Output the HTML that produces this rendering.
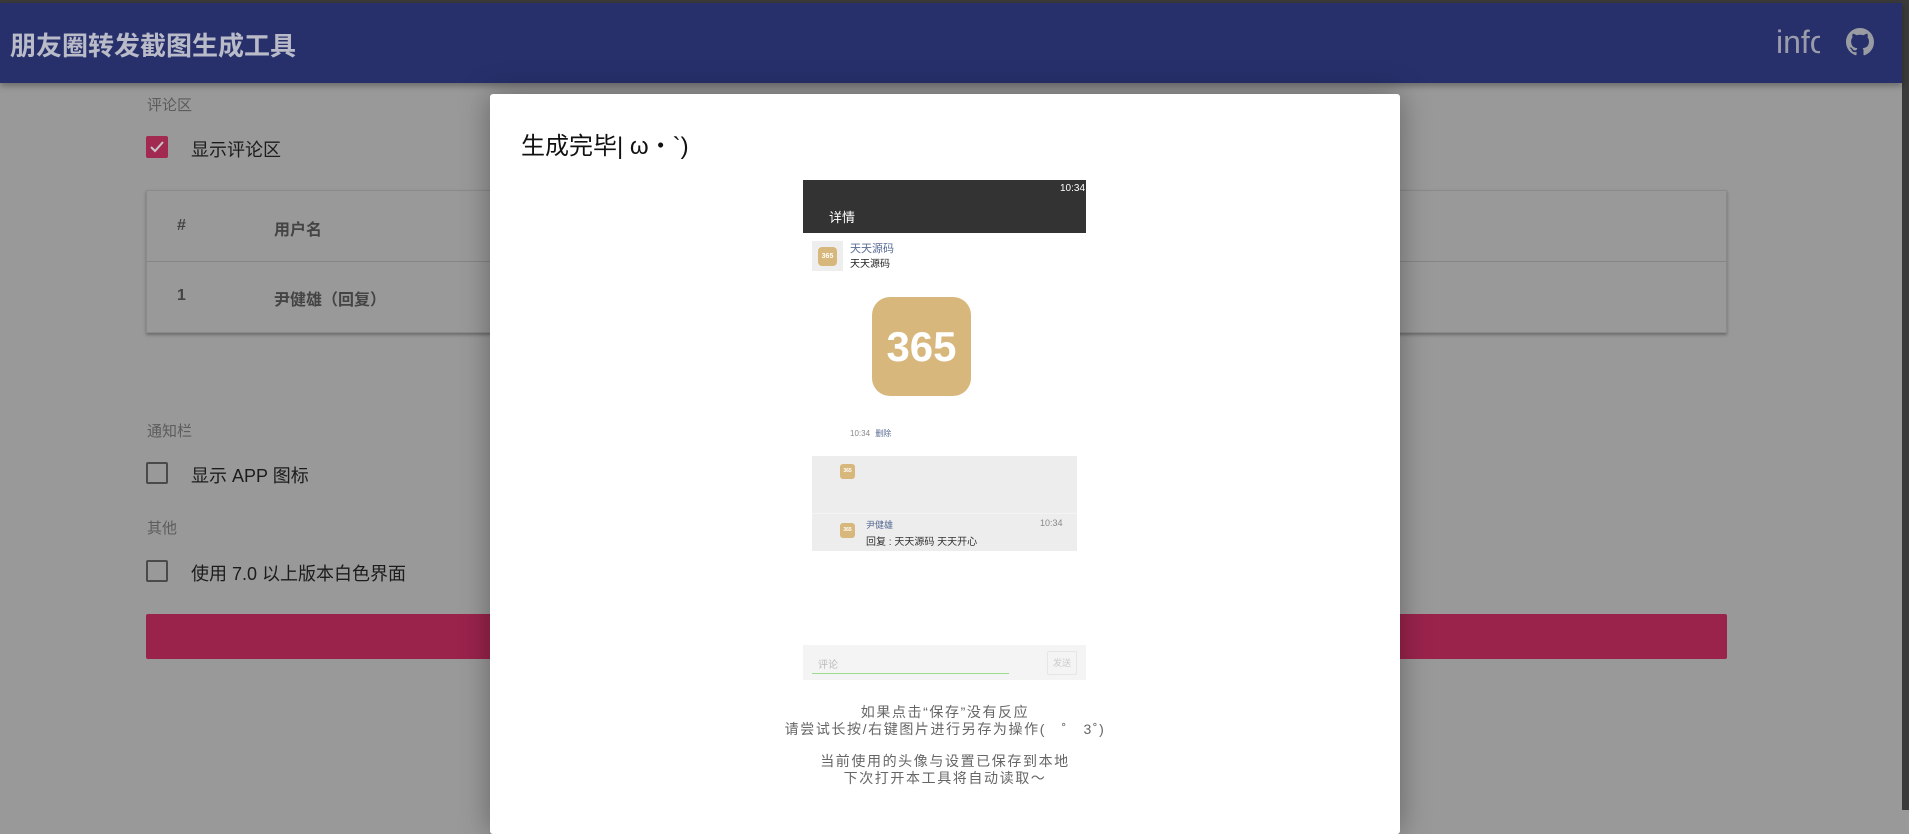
<!DOCTYPE html>
<html><head><meta charset="utf-8"><style>
*{margin:0;padding:0;box-sizing:border-box}
body{width:1909px;height:810px;overflow:hidden;background:#999;font-family:"Liberation Sans","Noto Sans CJK SC",sans-serif;position:relative}
.a{position:absolute;white-space:nowrap}
.cb{position:absolute;width:22px;height:22px;border:2px solid #4a4a4a;border-radius:2px}
</style></head><body>
<div class="a" style="left:0;top:0;width:1909px;height:3px;background:#3a3a3a"></div>
<div class="a" style="left:1902px;top:0;width:7px;height:810px;background:#3a3a3a"></div>
<div class="a" style="left:0;top:3px;width:1902px;height:80px;background:#27306b;box-shadow:0 3px 6px rgba(0,0,0,.3)"></div>
<div class="a" style="left:10px;top:26px;font-size:26px;font-weight:bold;color:#b9bbc8">朋友圈转发截图生成工具</div>
<div class="a" style="left:1776px;top:24px;font-size:32px;color:#9a9cac;width:44px;overflow:hidden">info</div>
<svg class="a" style="left:1846px;top:28px" width="28" height="28" viewBox="0 0 16 16"><path fill="#9a9ca4" d="M8 0C3.58 0 0 3.580 0 8c0 3.54 2.29 6.53 5.470 7.59.4.07.55-.17.55-.38 0-.19-.01-.82-.01-1.49-2.01.37-2.53-.49-2.69-.94-.09-.23-.48-.94-.82-1.13-.28-.15-.68-.52-.01-.53.63-.01 1.08.58 1.23.82.72 1.21 1.87.87 2.33.66.07-.52.28-.87.51-1.07-1.78-.2-3.64-.89-3.64-3.95 0-.87.31-1.59.82-2.15-.08-.2-.36-1.02.08-2.12 0 0 .67-.21 2.2.82.64-.18 1.32-.27 2-.27.68 0 1.36.09 2 .27 1.53-1.04 2.2-.82 2.2-.82.44 1.1.16 1.92.08 2.12.51.56.82 1.27.82 2.15 0 3.07-1.87 3.75-3.65 3.95.29.25.54.73.54 1.48 0 1.070-.01 1.93-.01 2.2 0 .21.15.46.55.38A8.013 8.013 0 0016 8c0-4.42-3.58-8-8-8z"/></svg>

<div class="a" style="left:147px;top:94px;font-size:15px;color:#5c5c5c">评论区</div>
<div class="cb" style="left:146px;top:136px;background:#a2294f;border-color:#a2294f"><svg width="18" height="18" style="position:absolute;left:0;top:0"><path d="M3 9l4 4 8-9" stroke="#c8c8c8" stroke-width="2" fill="none"/></svg></div>
<div class="a" style="left:191px;top:136px;font-size:18px;color:#1c1c1c">显示评论区</div>
<div class="a" style="left:146px;top:190px;width:1581px;height:143px;border:1px solid #8a8a8a;box-shadow:0 2px 3px rgba(0,0,0,.3)"></div>
<div class="a" style="left:147px;top:261px;width:1579px;height:1px;background:#858585"></div>
<div class="a" style="left:177px;top:217px;font-size:16px;font-weight:bold;color:#444">#</div>
<div class="a" style="left:274px;top:216px;font-size:16px;font-weight:bold;color:#444">用户名</div>
<div class="a" style="left:177px;top:287px;font-size:16px;font-weight:bold;color:#444">1</div>
<div class="a" style="left:274px;top:286px;font-size:16px;font-weight:bold;color:#444">尹健雄（回复）</div>

<div class="a" style="left:147px;top:420px;font-size:15px;color:#5c5c5c">通知栏</div>
<div class="cb" style="left:146px;top:462px"></div>
<div class="a" style="left:191px;top:462px;font-size:18px;color:#1c1c1c">显示 APP 图标</div>
<div class="a" style="left:147px;top:517px;font-size:15px;color:#5c5c5c">其他</div>
<div class="cb" style="left:146px;top:560px"></div>
<div class="a" style="left:191px;top:560px;font-size:18px;color:#1c1c1c">使用 7.0 以上版本白色界面</div>
<div class="a" style="left:146px;top:614px;width:1581px;height:45px;background:#9a234c;border-radius:2px"></div>

<div class="a" style="left:490px;top:94px;width:910px;height:740px;background:#fff;border-radius:3px;box-shadow:0 0 30px rgba(0,0,0,.35)"></div>
<div class="a" style="left:521px;top:126px;font-size:24px;color:#111">生成完毕| ω・`)</div>

<div class="a" style="left:803px;top:180px;width:283px;height:53px;background:#333"></div>
<div class="a" style="left:1060px;top:183px;font-size:10px;color:#fff">10:34</div>
<div class="a" style="left:829px;top:207px;font-size:13px;color:#fff">详情</div>
<div class="a" style="left:812px;top:241px;width:31px;height:30px;background:#eee"></div>
<div class="a" style="left:818px;top:247px;width:19px;height:19px;background:#d8b77c;border-radius:4px;color:#fff;font-size:7px;font-weight:bold;text-align:center;line-height:19px">365</div>
<div class="a" style="left:850px;top:240px;font-size:11px;color:#576b95">天天源码</div>
<div class="a" style="left:850px;top:255px;font-size:10px;color:#222">天天源码</div>
<div class="a" style="left:872px;top:297px;width:99px;height:99px;background:#d8b77c;border-radius:18px;color:#fff;font-size:42px;font-weight:bold;text-align:center;line-height:99px">365</div>
<div class="a" style="left:850px;top:428px;font-size:8px;color:#888">10:34 <span style="color:#576b95;margin-left:3px">删除</span></div>
<div class="a" style="left:812px;top:456px;width:265px;height:95px;background:#ededed"></div>
<div class="a" style="left:812px;top:513px;width:265px;height:1px;background:#f4f4f4"></div>
<div class="a" style="left:840px;top:464px;width:15px;height:15px;background:#d8b77c;border-radius:3px;color:#fff;font-size:5px;font-weight:bold;text-align:center;line-height:15px">365</div>
<div class="a" style="left:840px;top:523px;width:15px;height:15px;background:#d8b77c;border-radius:3px;color:#fff;font-size:5px;font-weight:bold;text-align:center;line-height:15px">365</div>
<div class="a" style="left:866px;top:518px;font-size:9px;color:#576b95">尹健雄</div>
<div class="a" style="left:1040px;top:518px;font-size:9px;color:#888">10:34</div>
<div class="a" style="left:866px;top:533px;font-size:10px;color:#333">回复 : 天天源码 天天开心</div>
<div class="a" style="left:803px;top:645px;width:283px;height:35px;background:#f4f4f4"></div>
<div class="a" style="left:818px;top:656px;font-size:10px;color:#bbb">评论</div>
<div class="a" style="left:812px;top:673px;width:197px;height:1px;background:#9bdc8e"></div>
<div class="a" style="left:1047px;top:651px;width:30px;height:24px;border:1px solid #e6e6e6;border-radius:2px;font-size:9px;color:#ccc;text-align:center;line-height:22px">发送</div>

<div class="a" style="left:490px;width:910px;top:704px;text-align:center;font-size:14px;line-height:17px;color:#666;letter-spacing:1.6px">如果点击“保存”没有反应<br>请尝试长按/右键图片进行另存为操作(　˚　3˚)</div>
<div class="a" style="left:490px;width:910px;top:753px;text-align:center;font-size:14px;line-height:17px;color:#666;letter-spacing:1.6px">当前使用的头像与设置已保存到本地<br>下次打开本工具将自动读取～</div>
</body></html>
